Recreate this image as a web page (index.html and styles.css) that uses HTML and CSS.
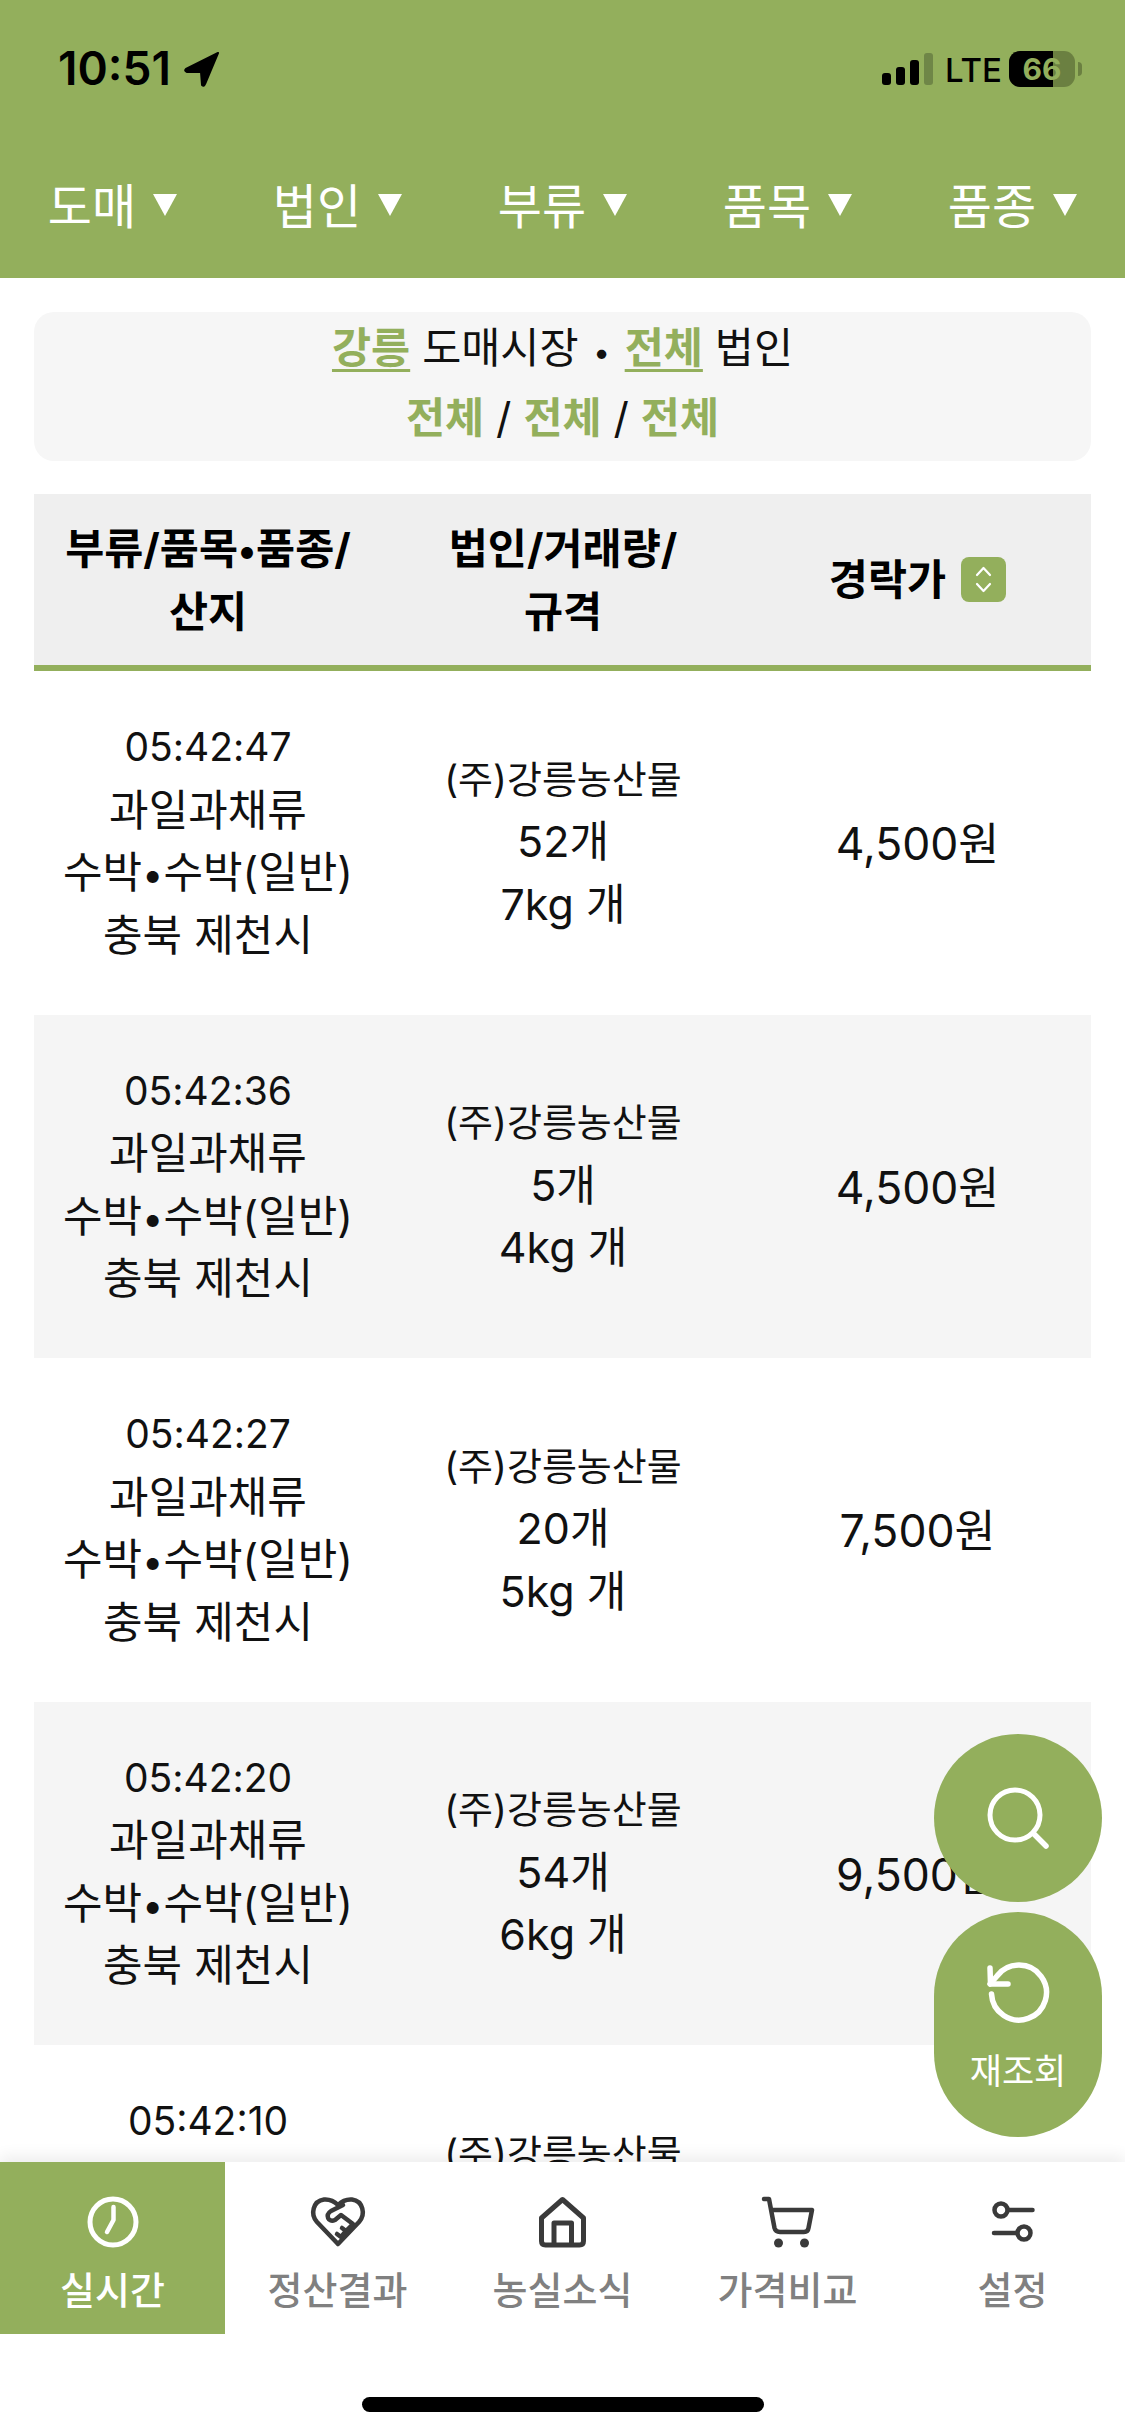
FILE: index.html
```html
<!DOCTYPE html>
<html lang="ko">
<head>
<meta charset="UTF-8">
<meta name="viewport" content="width=device-width, initial-scale=1.0">
<title>실시간 경락가</title>
<link rel="stylesheet" href="styles.css">
</head>
<body>

<header class="top">
    <div class="status">
        <div class="status-left">
            <span class="clock">10:51</span>
            <svg class="arrow-icon" viewBox="0 0 36 36" width="36" height="36"><path d="M34 2 L2 18 Q0 20 3 21 L17 21 L18 34 Q20 36 21 33 Z" fill="#000" stroke="#000" stroke-width="2" stroke-linejoin="round"/></svg>
        </div>
        <div class="status-right">
            <div class="bars">
                <span class="bar b1"></span>
                <span class="bar b2"></span>
                <span class="bar b3"></span>
                <span class="bar b4"></span>
            </div>
            <span class="lte">LTE</span>
            <div class="battery"><span class="battery-fill"></span><span class="battery-num">66</span></div>
            <span class="battery-nub"></span>
        </div>
    </div>
    <nav class="filters">
        <div class="filter">도매<span class="caret"></span></div>
        <div class="filter">법인<span class="caret"></span></div>
        <div class="filter">부류<span class="caret"></span></div>
        <div class="filter">품목<span class="caret"></span></div>
        <div class="filter">품종<span class="caret"></span></div>
    </nav>
</header>

<section class="summary">
    <p><a class="pick">강릉</a> 도매시장 <b class="dot">•</b> <a class="pick">전체</a> 법인</p>
    <p><span class="pick-b">전체</span> / <span class="pick-b">전체</span> / <span class="pick-b">전체</span></p>
</section>

<section class="table">
    <div class="row head">
        <div>부류/품목<span class="mid">•</span>품종/<br>산지</div>
        <div>법인/거래량/<br>규격</div>
        <div class="sort-cell">경락가
            <span class="sort">
                <svg viewBox="0 0 45 45" width="45" height="45"><path d="M16 18 L22.5 11 L29 18 M16 27 L22.5 34 L29 27" fill="none" stroke="#fff" stroke-width="2.2" stroke-linecap="round" stroke-linejoin="round"/></svg>
            </span>
        </div>
    </div>

    <div class="row">
        <div class="info"><span class="time">05:42:47</span><br>과일과채류<br>수박<span class="mid">•</span>수박(일반)<br>충북 제천시</div>
        <div class="info"><span class="corp">(주)강릉농산물</span><br>52개<br>7kg 개</div>
        <div class="price">4,500원</div>
    </div>
    <div class="row alt">
        <div class="info"><span class="time">05:42:36</span><br>과일과채류<br>수박<span class="mid">•</span>수박(일반)<br>충북 제천시</div>
        <div class="info"><span class="corp">(주)강릉농산물</span><br>5개<br>4kg 개</div>
        <div class="price">4,500원</div>
    </div>
    <div class="row">
        <div class="info"><span class="time">05:42:27</span><br>과일과채류<br>수박<span class="mid">•</span>수박(일반)<br>충북 제천시</div>
        <div class="info"><span class="corp">(주)강릉농산물</span><br>20개<br>5kg 개</div>
        <div class="price">7,500원</div>
    </div>
    <div class="row alt">
        <div class="info"><span class="time">05:42:20</span><br>과일과채류<br>수박<span class="mid">•</span>수박(일반)<br>충북 제천시</div>
        <div class="info"><span class="corp">(주)강릉농산물</span><br>54개<br>6kg 개</div>
        <div class="price">9,500원</div>
    </div>
    <div class="row">
        <div class="info"><span class="time">05:42:10</span><br>&nbsp;<br>&nbsp;<br>&nbsp;</div>
        <div class="info"><span class="corp">(주)강릉농산물</span><br>&nbsp;<br>&nbsp;</div>
        <div class="price"></div>
    </div>
</section>

<div class="fabs">
    <button class="fab">
        <svg viewBox="0 0 90 90" width="90" height="90"><circle cx="42" cy="42" r="25" fill="none" stroke="#fff" stroke-width="5"/><path d="M61 61 L73 73" stroke="#fff" stroke-width="5.5" stroke-linecap="round"/></svg>
    </button>
    <button class="fab fab-tall">
        <svg viewBox="0 0 70 70" width="70" height="70"><path d="M8.5 37 A27.5 27.5 0 1 0 14 19 L7 27" fill="none" stroke="#fff" stroke-width="5.5" stroke-linecap="round"/><path d="M7 11 L7.5 27 L25 27" fill="none" stroke="#fff" stroke-width="5.5" stroke-linecap="round" stroke-linejoin="round"/></svg>
        <span>재조회</span>
    </button>
</div>

<footer class="tabs">
    <div class="tab-row">
        <div class="tab on">
            <svg viewBox="0 0 60 60" width="60" height="60"><circle cx="30" cy="30" r="23" fill="none" stroke="#fff" stroke-width="5"/><path d="M30.5 15 V28 L24 40" fill="none" stroke="#fff" stroke-width="4.5" stroke-linecap="round" stroke-linejoin="round"/></svg>
            <span>실시간</span>
        </div>
        <div class="tab">
            <svg viewBox="0 0 60 60" width="60" height="60" fill="none" stroke="#3a3a3a" stroke-width="4.5" stroke-linecap="round" stroke-linejoin="round"><path d="M30 52 L9 30 C2 22 5 9 16 7.5 C22 7 27 10 30 13 C33 10 38 7 44 7.5 C55 9 58 22 51 30 Z"/><path d="M35 13 L23 19 C17 23 20 31 27 28 L33 23 L45 32"/><path d="M44 33 L38 39 L34 36 M38 39 L33 45 L29 42"/></svg>
            <span>정산결과</span>
        </div>
        <div class="tab">
            <svg viewBox="0 0 60 60" width="60" height="60" fill="none" stroke="#3a3a3a" stroke-width="5" stroke-linejoin="round"><path d="M29.5 7.5 L8.5 26 V49 Q8.5 53 12.5 53 H46.5 Q50.5 53 50.5 49 V26 Z"/><path d="M21 53 V31 H38.5 V53"/></svg>
            <span>농실소식</span>
        </div>
        <div class="tab">
            <svg viewBox="0 0 60 60" width="60" height="60" fill="none" stroke="#3a3a3a" stroke-width="4.5" stroke-linecap="round" stroke-linejoin="round"><path d="M6 7 H11 L16.5 36 Q17.5 40 22 40 H46 Q50 40 50.5 36 L54 18 H13"/><circle cx="20.5" cy="51" r="4.5" fill="#3a3a3a" stroke="none"/><circle cx="46.5" cy="51" r="4.5" fill="#3a3a3a" stroke="none"/></svg>
            <span>가격비교</span>
        </div>
        <div class="tab">
            <svg viewBox="0 0 60 60" width="60" height="60" fill="none" stroke="#3a3a3a" stroke-width="4.5" stroke-linecap="round"><circle cx="18" cy="18" r="6.5"/><path d="M25 18 H49.5"/><circle cx="41" cy="41" r="6.5"/><path d="M11 41 H34"/></svg>
            <span>설정</span>
        </div>
    </div>
    <div class="home-bar"></div>
</footer>

</body>
</html>
```

FILE: styles.css
```css
html, body {
    margin: 0;
    padding: 0;
}
body {
    position: relative;
    width: 1125px;
    height: 2436px;
    overflow: hidden;
    background-color: #fff;
    color: #111;
    font-family: Inter, "Noto Sans CJK KR", sans-serif;
}

.top {
    height: 278px;
    background-color: #93af5c;
}
.status {
    display: flex;
    justify-content: space-between;
    height: 170px;
    padding: 46px 43px 0 58px;
    box-sizing: border-box;
}
.status-left {
    display: flex;
    align-items: flex-start;
    gap: 13px;
}
.clock {
    font-size: 46px;
    font-weight: 600;
    line-height: 44px;
    color: #000;
}
.arrow-icon {
    margin-top: 5px;
}
.status-right {
    display: flex;
    align-items: flex-start;
    height: 44px;
}
.bars {
    display: flex;
    align-items: flex-end;
    gap: 5px;
    height: 32px;
    margin-top: 7px;
}
.bar {
    width: 9px;
    background-color: #000;
    border-radius: 3px;
}
.b1 { height: 12px; }
.b2 { height: 18px; }
.b3 { height: 25px; }
.b4 { height: 32px; background-color: #6f8647; }
.lte {
    margin-left: 12px;
    margin-top: 2px;
    font-size: 33px;
    font-weight: 500;
    line-height: 44px;
    color: #000;
}
.battery {
    position: relative;
    width: 66px;
    height: 36px;
    margin-left: 7px;
    margin-top: 5px;
    border-radius: 11px;
    background-color: #6b8041;
    overflow: hidden;
}
.battery-fill {
    position: absolute;
    left: 0;
    top: 0;
    width: 44px;
    height: 36px;
    background-color: #000;
}
.battery-num {
    position: absolute;
    left: 0;
    right: 0;
    top: 0;
    text-align: center;
    font-size: 30px;
    font-weight: 700;
    line-height: 36px;
    color: #93af5c;
}
.battery-nub {
    width: 4px;
    height: 14px;
    margin: 16px 0 0 3px;
    background-color: #6b8041;
    border-radius: 0 4px 4px 0;
}

.filters {
    display: grid;
    grid-template-columns: repeat(5, 225px);
}
.filter {
    display: flex;
    justify-content: center;
    align-items: center;
    gap: 17px;
    height: 66px;
    font-size: 48px;
    color: #fff;
}
.caret {
    width: 0;
    height: 0;
    margin-top: 4px;
    border-left: 12px solid transparent;
    border-right: 12px solid transparent;
    border-top: 22px solid #fff;
}

.summary {
    margin: 34px 34px 0;
    height: 149px;
    padding-top: 1px;
    box-sizing: border-box;
    background-color: #f6f6f6;
    border-radius: 20px;
    text-align: center;
    font-size: 42.5px;
}
.summary p {
    margin: 0;
    height: 70px;
    line-height: 70px;
}
.pick {
    color: #93af5c;
    font-weight: 700;
    text-decoration: underline;
    text-underline-offset: 6px;
    text-decoration-thickness: 3px;
}
.pick-b {
    color: #93af5c;
    font-weight: 700;
}
.dot {
    font-size: 30px;
    margin: 0 4px;
}
.mid {
    font-size: 38px;
    line-height: 0;
}

.table {
    margin: 33px 34px 0;
}
.row {
    display: grid;
    grid-template-columns: 348px 362px 1fr;
    align-items: center;
    height: 343.5px;
    text-align: center;
}
.alt {
    background-color: #f5f5f5;
}
.head {
    height: 177px;
    box-sizing: border-box;
    background-color: #efefef;
    border-bottom: 6px solid #93af5c;
    font-size: 42.5px;
    font-weight: 700;
    line-height: 63px;
    color: #000;
}
.sort-cell {
    display: flex;
    justify-content: center;
    align-items: center;
    gap: 15px;
}
.sort {
    display: flex;
    width: 45px;
    height: 45px;
    background-color: #93af5c;
    border-radius: 8px;
}
.info {
    margin-top: -5px;
    font-size: 43px;
    line-height: 62.5px;
}
.time {
    font-size: 39px;
}
.corp {
    font-size: 38px;
}
.price {
    margin-top: -4px;
    font-size: 44.5px;
}

.fabs {
    position: absolute;
    top: 1734px;
    right: 23px;
    display: flex;
    flex-direction: column;
    gap: 10px;
}
.fab {
    display: flex;
    flex-direction: column;
    align-items: center;
    justify-content: center;
    width: 168px;
    height: 168px;
    padding: 0;
    border: none;
    border-radius: 84px;
    background-color: #93af5c;
    color: #fff;
    font-family: inherit;
    font-size: 35px;
}
.fab-tall {
    height: 225px;
    justify-content: flex-start;
    padding-top: 45px;
    gap: 16px;
}

.tabs {
    position: absolute;
    left: 0;
    right: 0;
    bottom: 0;
    height: 274px;
    background-color: #fff;
    box-shadow: 0 -6px 14px rgba(0, 0, 0, 0.07);
}
.tab-row {
    display: grid;
    grid-template-columns: repeat(5, 225px);
}
.tab {
    display: flex;
    flex-direction: column;
    align-items: center;
    height: 172px;
    padding-top: 30px;
    box-sizing: border-box;
    font-size: 38px;
    font-weight: 500;
    line-height: 50px;
    color: #808080;
}
.tab span {
    margin-top: 13px;
}
.on {
    background-color: #93af5c;
    color: #fff;
}
.home-bar {
    width: 402px;
    height: 15px;
    margin: 63px auto 0;
    background-color: #000;
    border-radius: 8px;
}
```
